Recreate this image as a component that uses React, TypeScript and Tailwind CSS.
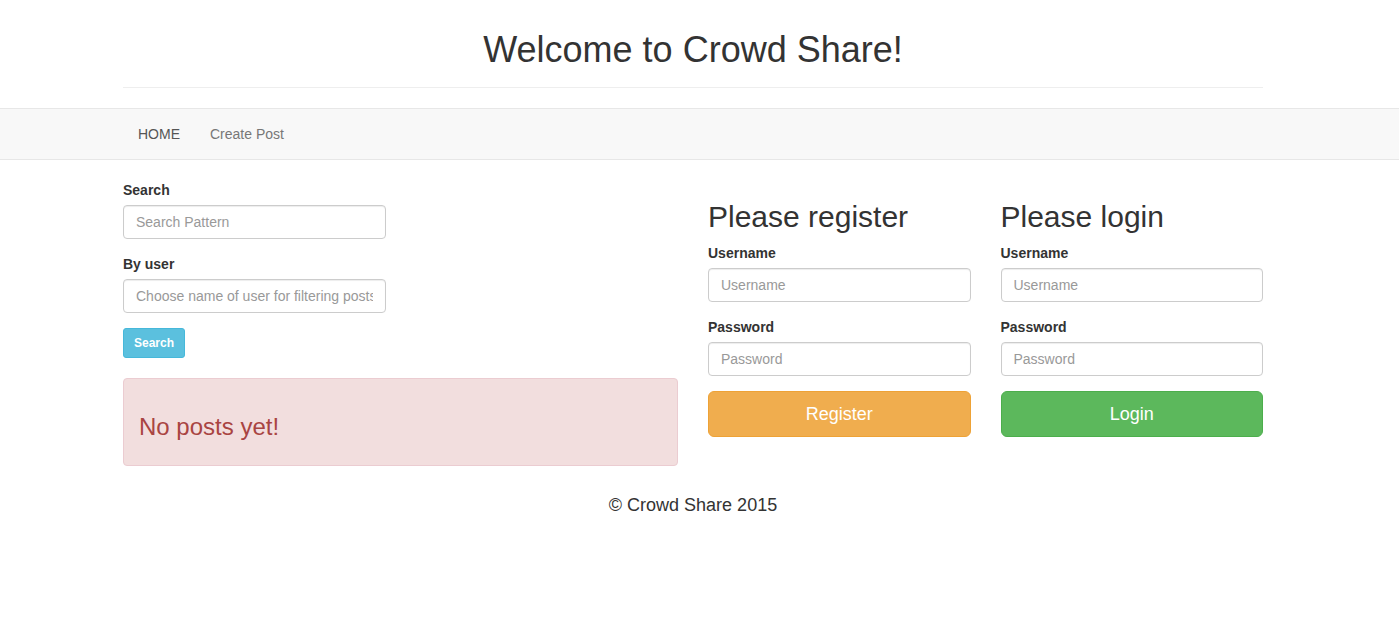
import React from "react";

function Field({ label, placeholder, type = "text", fullWidth = true }: { label: string; placeholder: string; type?: string; fullWidth?: boolean }) {
  return (
    <div className="mb-[15px]">
      <label className="block mb-[5px] font-bold text-[14px] leading-[20px] text-[#333]">{label}</label>
      <input
        type={type}
        placeholder={placeholder}
        className={`${fullWidth ? "w-full" : "w-[262.5px]"} block h-[34px] px-[12px] py-[6px] text-[14px] leading-[20px] text-[#555] bg-white border border-[#ccc] rounded-[4px] shadow-[inset_0_1px_1px_rgba(0,0,0,0.075)] placeholder:text-[#999] outline-none`}
      />
    </div>
  );
}

export default function App() {
  return (
    <div className="min-h-screen bg-white text-[#333] text-[14px] leading-[20px] font-['Liberation_Sans',Arial,Helvetica,sans-serif]">
      <div className="ml-[108px] w-[1170px] px-[15px]">
        <div className="pt-[30px] pb-[9px] border-b border-[#eee] mb-[20px]">
          <h1 className="text-center text-[36px] leading-[40px] mb-[8px] font-normal text-[#333]">Welcome to Crowd Share!</h1>
        </div>
      </div>

      <nav className="border-y border-[#e7e7e7] bg-[#f8f8f8] mb-[20px]">
        <div className="ml-[108px] w-[1170px] px-[15px]">
          <ul className="flex">
            <li>
              <a href="#" className="block px-[15px] py-[15px] leading-[20px] text-[#555]">HOME</a>
            </li>
            <li>
              <a href="#" className="block px-[15px] py-[15px] leading-[20px] text-[#777]">Create Post</a>
            </li>
          </ul>
        </div>
      </nav>

      <div className="ml-[108px] w-[1170px] px-[15px]">
        <div className="grid grid-cols-2 gap-x-[30px]">
          <div>
            <form>
              <Field label="Search" placeholder="Search Pattern" fullWidth={false} />
              <Field label="By user" placeholder="Choose name of user for filtering posts" fullWidth={false} />
              <button
                type="button"
                className="h-[30px] px-[10px] text-[12px] leading-[18px] font-bold text-white bg-[#5bc0de] border border-[#46b8da] rounded-[3px]"
              >
                Search
              </button>
            </form>
            <div className="mt-[20px] mb-[20px] p-[15px] bg-[#f2dede] border border-[#ebccd1] rounded-[4px] text-[#a94442]">
              <h3 className="mt-[20px] mb-[10px] text-[24px] leading-[26px] font-normal">No posts yet!</h3>
            </div>
          </div>

          <div className="grid grid-cols-2 gap-x-[30px]">
            <div>
              <h2 className="mt-[20px] mb-[10px] text-[30px] leading-[33px] font-normal text-[#333]">Please register</h2>
              <Field label="Username" placeholder="Username" />
              <Field label="Password" placeholder="Password" type="password" />
              <button
                type="button"
                className="w-full h-[46px] px-[16px] text-[18px] leading-[24px] text-white bg-[#f0ad4e] border border-[#eea236] rounded-[6px]"
              >
                Register
              </button>
            </div>
            <div>
              <h2 className="mt-[20px] mb-[10px] text-[30px] leading-[33px] font-normal text-[#333]">Please login</h2>
              <Field label="Username" placeholder="Username" />
              <Field label="Password" placeholder="Password" type="password" />
              <button
                type="button"
                className="w-full h-[46px] px-[16px] text-[18px] leading-[24px] text-white bg-[#5cb85c] border border-[#4cae4c] rounded-[6px]"
              >
                Login
              </button>
            </div>
          </div>
        </div>

        <footer className="mt-[6px] text-center">
          <p className="text-[18px] leading-[26px] text-[#333]">© Crowd Share 2015</p>
        </footer>
      </div>
    </div>
  );
}
